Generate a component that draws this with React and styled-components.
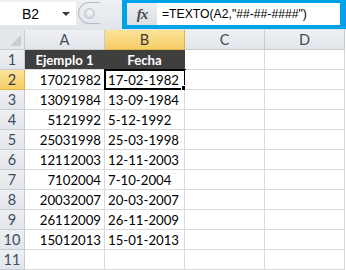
import React from 'react';
import styled, { createGlobalStyle } from 'styled-components';

const GlobalStyle = createGlobalStyle`
    html, body {
        margin: 0;
        padding: 0;
        background: #ffffff;
        overflow: hidden;
    }
`;

const Page = styled.div`
    width: 346px;
    height: 270px;
    display: flex;
    flex-direction: column;
    font-family: Lato, "Liberation Sans", sans-serif;
    background: #ffffff;
`;

const Toolbar = styled.div`
    height: 30px;
    display: flex;
    align-items: flex-start;
    background: linear-gradient(#eef0f3, #e1e5ea);
`;

const NameBox = styled.div`
    width: 76px;
    height: 23px;
    margin-top: 2px;
    background: #ffffff;
    display: flex;
    align-items: center;
    box-sizing: border-box;
    padding: 0 6px 0 22px;
    font-family: "Liberation Sans", sans-serif;
    font-size: 14px;
    color: #000;
`;

const NameText = styled.span`
    flex: 1;
`;

const Arrow = styled.span`
    width: 0;
    height: 0;
    border-left: 4px solid transparent;
    border-right: 4px solid transparent;
    border-top: 4px solid #3a3a3a;
`;

const Splitter = styled.div`
    width: 22px;
    height: 22px;
    margin-top: 2px;
    margin-left: 2px;
    box-sizing: border-box;
    border: 1px solid #b8bec6;
    border-right: none;
    border-radius: 11px 0 0 11px;
    display: flex;
    align-items: center;
    justify-content: center;
`;

const Dot = styled.span`
    width: 9px;
    height: 9px;
    border-radius: 50%;
    background: radial-gradient(circle at 50% 40%, #f6f7f9, #c9ced5);
    border: 1px solid #c0c5cc;
`;

const FormulaFrame = styled.div`
    margin-left: auto;
    width: 224px;
    height: 29px;
    box-sizing: border-box;
    background: #00a2e8;
    padding: 3px 6px 4px 5px;
    display: flex;
`;

const FxButton = styled.div`
    width: 30px;
    background: linear-gradient(#eceef1, #dadee3);
    display: flex;
    align-items: center;
    justify-content: center;
    font-family: "Liberation Serif", serif;
    font-style: italic;
    font-weight: bold;
    font-size: 15px;
    color: #4a4a4a;
    letter-spacing: -1px;
`;

const FormulaInput = styled.div`
    flex: 1;
    background: #ffffff;
    display: flex;
    align-items: center;
    padding-left: 5px;
    font-family: "Liberation Sans", sans-serif;
    font-size: 12.2px;
    color: #000;
    white-space: nowrap;
`;

const Sheet = styled.div`
    display: grid;
    grid-template-columns: 25px 80px 80px 80px 80px 1fr;
    grid-template-rows: 20px repeat(11, 20px);
    font-size: 13.2px;
`;

const Corner = styled.div`
    box-sizing: border-box;
    background: #e4e7eb;
    border-right: 1px solid #c6cbd1;
    border-bottom: 1px solid #c6cbd1;
    position: relative;
    &::after {
        content: '';
        position: absolute;
        right: 3px;
        bottom: 3px;
        border-left: 11px solid transparent;
        border-bottom: 11px solid #c9cdd2;
    }
`;

const Header = styled.div`
    box-sizing: border-box;
    display: flex;
    align-items: center;
    justify-content: center;
    color: ${p => (p.active ? '#3b3b3b' : '#3e4c5e')};
    background: ${p => (p.active
        ? 'linear-gradient(#fbe39a, #f6cd65)'
        : 'linear-gradient(#eef0f3, #e2e5ea)')};
    border-right: 1px solid ${p => (p.active ? '#e2b24a' : '#c6cbd1')};
    border-bottom: 1px solid ${p => (p.active ? '#e2b24a' : '#c6cbd1')};
    font-size: 14.5px;
`;

const Cell = styled.div`
    box-sizing: border-box;
    display: flex;
    align-items: center;
    justify-content: ${p => p.align || 'flex-start'};
    padding: 0 3px 0 3px;
    white-space: nowrap;
    background: ${p => (p.dark ? '#3f3f3f' : '#ffffff')};
    color: ${p => (p.dark ? '#ffffff' : '#000000')};
    font-weight: ${p => (p.dark ? 'bold' : 'normal')};
    border-right: 1px solid ${p => (p.dark ? '#3f3f3f' : '#d9d9d9')};
    border-bottom: 1px solid #d9d9d9;
    position: relative;
`;

const Selection = styled.div`
    position: absolute;
    left: -1px;
    top: -1px;
    right: -2px;
    bottom: -1px;
    border: 2px solid #000;
    pointer-events: none;
    &::after {
        content: '';
        position: absolute;
        right: -4px;
        bottom: -4px;
        width: 5px;
        height: 5px;
        background: #000;
        border: 1px solid #fff;
    }
`;

const data = [
    ['17021982', '17-02-1982'],
    ['13091984', '13-09-1984'],
    ['5121992', '5-12-1992'],
    ['25031998', '25-03-1998'],
    ['12112003', '12-11-2003'],
    ['7102004', '7-10-2004'],
    ['20032007', '20-03-2007'],
    ['26112009', '26-11-2009'],
    ['15012013', '15-01-2013'],
];

const columns = ['A', 'B', 'C', 'D'];

const App = () => {
    const rows = [['Ejemplo 1', 'Fecha'], ...data, ['', '']];

    return (
        <Page>
            <GlobalStyle />
            <Toolbar>
                <NameBox>
                    <NameText>B2</NameText>
                    <Arrow />
                </NameBox>
                <Splitter><Dot /></Splitter>
                <FormulaFrame>
                    <FxButton>fx</FxButton>
                    <FormulaInput>=TEXTO(A2,"##-##-####")</FormulaInput>
                </FormulaFrame>
            </Toolbar>
            <Sheet>
                <Corner />
                {columns.map(c => (
                    <Header key={c} active={c === 'B'}>{c}</Header>
                ))}
                <div />
                {rows.map((row, i) => {
                    const n = i + 1;
                    const dark = n === 1;
                    return (
                        <React.Fragment key={n}>
                            <Header active={n === 2}>{n}</Header>
                            <Cell dark={dark} align={dark ? 'center' : 'flex-end'}>{row[0]}</Cell>
                            <Cell dark={dark} align={dark ? 'center' : 'flex-start'}>
                                {row[1]}
                                {n === 2 && <Selection />}
                            </Cell>
                            <Cell />
                            <Cell />
                            <div />
                        </React.Fragment>
                    );
                })}
            </Sheet>
        </Page>
    );
};

export default App;
